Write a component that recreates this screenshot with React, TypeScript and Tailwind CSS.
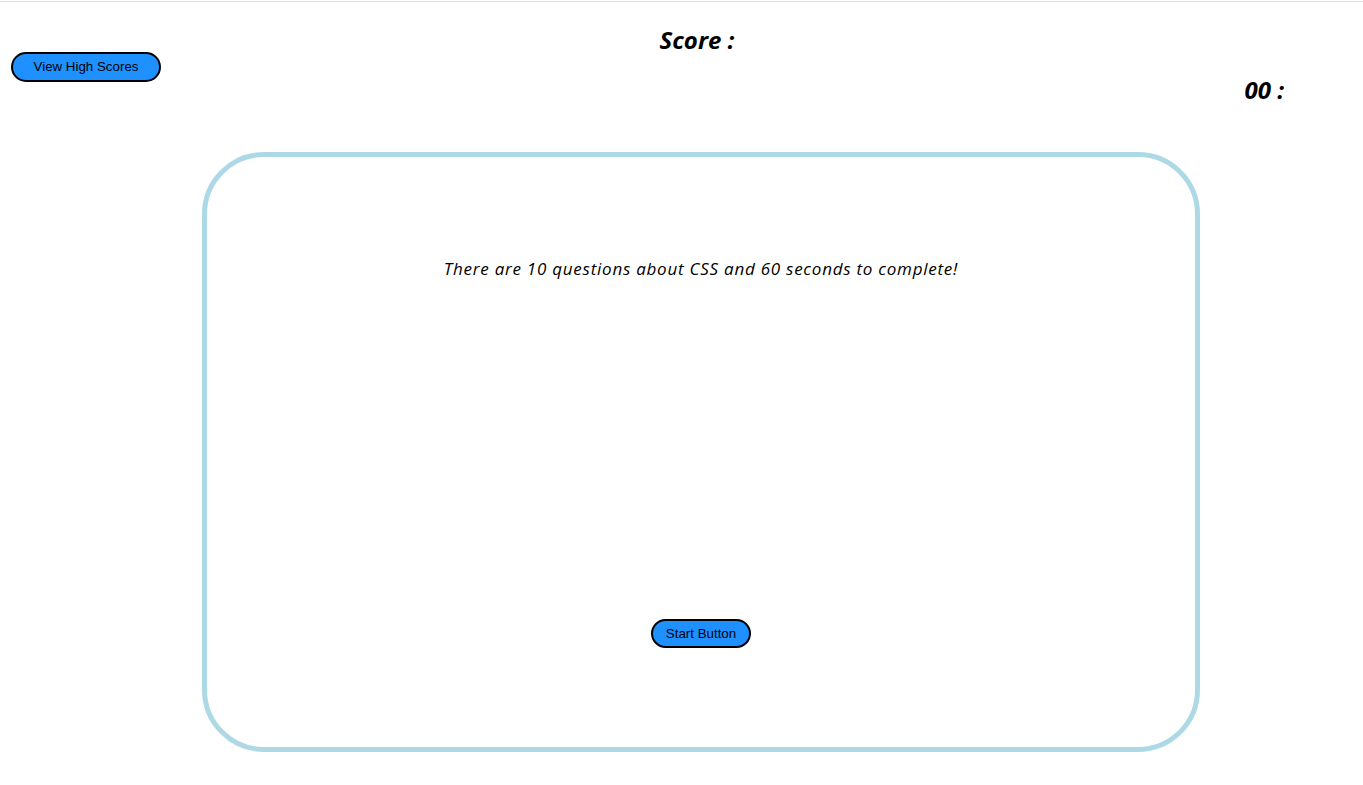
import React from 'react';

const App: React.FC = () => {
  return (
    <div className="min-h-[785px] bg-white text-black font-['Open_Sans',sans-serif]">
      <div className="h-px" />
      <div className="h-px bg-[#dedede]" />

      <header>
        <h1 className="pt-[22px] pl-[31px] text-center text-2xl leading-8 font-bold italic">
          Score :
        </h1>
        <div className="flex items-start justify-between">
          <button className="ml-[11px] -mt-[4px] h-[30px] w-[150px] rounded-full border-2 border-black bg-[#1e90ff] font-['Liberation_Sans',Arial,sans-serif] text-[13.33px] text-black">
            View High Scores
          </button>
          <div className="mt-[18px] pr-[79px] text-2xl leading-8 font-bold italic">00 :</div>
        </div>
      </header>

      <main className="mt-[46px] ml-[202px] w-[998px]">
        <div className="flex h-[600px] flex-col items-center rounded-[62px] border-[5px] border-[#add8e6]">
          <p className="mt-[100px] text-[17px] leading-6 tracking-[0.75px] italic">
            There are 10 questions about CSS and 60 seconds to complete!
          </p>
          <button className="mt-[338px] h-[29px] w-[100px] rounded-full border-2 border-black bg-[#1e90ff] font-['Liberation_Sans',Arial,sans-serif] text-[13.33px] text-black">
            Start Button
          </button>
        </div>
      </main>
    </div>
  );
};

export default App;
